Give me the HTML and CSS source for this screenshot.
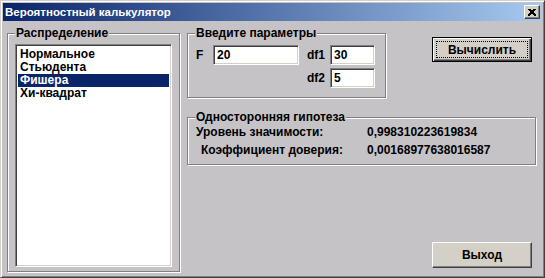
FILE: index.html
```html
<!DOCTYPE html>
<html lang="ru">
<head>
    <meta charset="UTF-8">
    <title>Вероятностный калькулятор</title>
    <link rel="stylesheet" href="styles.css">
</head>
<body>
    <div class="window">
        <div class="titlebar">
            <span class="title">Вероятностный калькулятор</span>
            <div class="close-btn">
                <svg width="8" height="7" viewBox="0 0 8 7"><path d="M0.5 0 L7.5 7 M1.5 0 L8.5 7 M7.5 0 L0.5 7 M6.5 0 L-0.5 7" stroke="#000" stroke-width="1" shape-rendering="crispEdges"/></svg>
            </div>
        </div>

        <div class="client">
            <div class="group dist-group">
                <span class="group-title">Распределение</span>
                <div class="listbox">
                    <div class="item">Нормальное</div>
                    <div class="item">Стьюдента</div>
                    <div class="item selected">Фишера</div>
                    <div class="item">Хи-квадрат</div>
                </div>
            </div>

            <div class="right-col">
                <div class="top-row">
                    <div class="group params-group">
                        <span class="group-title">Введите параметры</span>
                        <div class="params">
                            <label class="p-f">F</label>
                            <div class="input in-f">20</div>
                            <label class="p-df1">df1</label>
                            <div class="input in-df1">30</div>
                            <label class="p-df2">df2</label>
                            <div class="input in-df2">5</div>
                        </div>
                    </div>
                    <button class="btn default calc-btn"><span class="focus">Вычислить</span></button>
                </div>

                <div class="group result-group">
                    <span class="group-title">Односторонняя гипотеза</span>
                    <div class="results">
                        <span>Уровень значимости:</span>
                        <span>0,998310223619834</span>
                        <span class="indent">Коэффициент доверия:</span>
                        <span>0,00168977638016587</span>
                    </div>
                </div>

                <button class="btn exit-btn">Выход</button>
            </div>
        </div>
    </div>
</body>
</html>
```

FILE: styles.css
```css
body { margin: 0; font-family: "Liberation Sans", Arial, sans-serif; font-size: 12px; font-weight: bold; color: #000; }

.window { width: 545px; height: 278px; box-sizing: border-box; background: #c6c3c6; border: 1px solid; border-color: #d4d0c8 #404040 #404040 #d4d0c8; box-shadow: inset 1px 1px 0 #fff, inset -1px -1px 0 #808080; padding: 2px; display: flex; flex-direction: column; }

.titlebar { height: 18px; background: linear-gradient(to right, #0a246a, #a6caf0); display: flex; align-items: center; justify-content: space-between; padding: 0 2px 0 2px; }
.title { color: #fff; font-size: 11.5px; }
.close-btn { width: 16px; height: 14px; box-sizing: border-box; background: #d4d0c8; border: 1px solid; border-color: #fff #404040 #404040 #fff; box-shadow: inset -1px -1px 0 #808080; display: flex; align-items: center; justify-content: center; }

.client { display: flex; padding: 12px 0 0 4px; flex: 1; }

.group { position: relative; box-sizing: border-box; border: 1px solid #808080; box-shadow: 1px 1px 0 #fff, inset 1px 1px 0 #fff; }
.group-title { position: absolute; top: -8px; left: 7px; padding: 0 1px; background: #c6c3c6; line-height: 14px; }

.dist-group { width: 173px; height: 239px; padding: 10px 0 0 7px; }
.listbox { width: 157px; height: 223px; box-sizing: border-box; background: #fff; border: 1px solid; border-color: #808080 #fff #fff #808080; box-shadow: inset 1px 1px 0 #404040, inset -1px -1px 0 #d4d0c8; padding: 3px 2px; }
.item { height: 13px; line-height: 13px; padding-left: 2px; }
.item.selected { background: #0a246a; color: #fff; }

.right-col { margin-left: 7px; display: flex; flex-direction: column; }
.top-row { display: flex; align-items: flex-start; }

.params-group { width: 199px; height: 65px; }
.params { display: grid; grid-template-columns: 17px 86px 8px 23px 45px; grid-template-rows: 20px 20px; row-gap: 3px; padding: 11px 0 0 8px; align-items: center; }
.p-f { grid-column: 1; grid-row: 1; }
.in-f { grid-column: 2; grid-row: 1; }
.p-df1 { grid-column: 4; grid-row: 1; }
.in-df1 { grid-column: 5; grid-row: 1; }
.p-df2 { grid-column: 4; grid-row: 2; }
.in-df2 { grid-column: 5; grid-row: 2; }

.input { height: 20px; box-sizing: border-box; background: #fff; border: 1px solid; border-color: #808080 #fff #fff #808080; box-shadow: inset 1px 1px 0 #404040, inset -1px -1px 0 #d4d0c8; padding-left: 3px; line-height: 18px; }

.btn { font: inherit; background: #d4d0c8; color: #000; box-sizing: border-box; border: 1px solid; border-color: #fff #404040 #404040 #fff; box-shadow: inset -1px -1px 0 #808080; padding: 0; }
.btn.default { border-color: #000; box-shadow: inset 1px 1px 0 #fff, inset -1px -1px 0 #404040, inset -2px -2px 0 #808080; }
.calc-btn { width: 100px; height: 25px; margin: 4px 0 0 46px; padding: 3px; }
.focus { display: flex; align-items: center; justify-content: center; height: 100%; border: 1px dotted #000; box-sizing: border-box; }

.result-group { width: 349px; height: 48px; margin-top: 19px; }
.results { display: grid; grid-template-columns: 171px auto; grid-auto-rows: 18px; padding: 5px 0 0 8px; line-height: 18px; }
.indent { padding-left: 5px; }

.exit-btn { width: 100px; height: 26px; margin: 77px 0 0 245px; }
```
